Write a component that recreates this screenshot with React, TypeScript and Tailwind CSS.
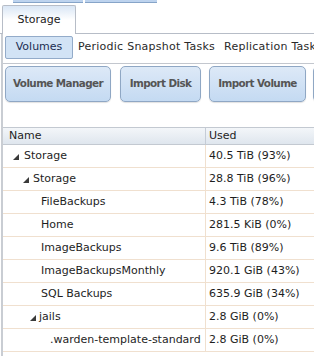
import React from "react";

const rows: { name: string; used: string; tri?: number; text: number }[] = [
  { name: "Storage", used: "40.5 TiB (93%)", tri: 10, text: 21 },
  { name: "Storage", used: "28.8 TiB (96%)", tri: 20, text: 30 },
  { name: "FileBackups", used: "4.3 TiB (78%)", text: 38 },
  { name: "Home", used: "281.5 KiB (0%)", text: 38 },
  { name: "ImageBackups", used: "9.6 TiB (89%)", text: 38 },
  { name: "ImageBackupsMonthly", used: "920.1 GiB (43%)", text: 38 },
  { name: "SQL Backups", used: "635.9 GiB (34%)", text: 38 },
  { name: "jails", used: "2.8 GiB (0%)", tri: 27, text: 36 },
  { name: ".warden-template-standard", used: "2.8 GiB (0%)", text: 47 },
];

function Tri() {
  return (
    <svg width="6" height="6" viewBox="0 0 6 6" className="block">
      <polygon points="6,0 6,6 0,6" fill="#3a3a3a" />
    </svg>
  );
}

function Btn({ label, w, ml }: { label: string; w: string; ml: string }) {
  return (
    <div
      className={`${w} ${ml} h-[36px] shrink-0 rounded-[5px] border border-[#8fa7c4] bg-gradient-to-b from-[#dde9f7] to-[#c4daf2] flex items-center justify-center text-[10.4px] font-bold tracking-[-0.6px] text-[#555555] shadow-[0_1px_1px_rgba(0,0,0,0.12)]`}
    >
      {label}
    </div>
  );
}

export default function App() {
  return (
    <div
      className="w-[314px] h-[356px] overflow-hidden bg-white text-[11px] text-[#1e1e1e]"
      style={{ fontFamily: '"DejaVu Sans", Verdana, sans-serif' }}
    >
      {/* top strip: bottoms of tabs above */}
      <div className="flex h-[3px]">
        <div className="ml-[13px] w-[70px] h-[3px] bg-[#bdd3ee] border-b border-[#86a4c8]" />
        <div className="ml-[2px] w-[72px] h-[3px] bg-[#bdd3ee] border-b border-[#86a4c8]" />
      </div>
      {/* tab strip */}
      <div className="flex items-end h-[31px] border-b border-[#b7bdc7]">
        <div className="ml-[2px] -mb-px w-[74px] h-[29px] border border-b-0 border-[#b7bdc7] rounded-t-[2px] bg-gradient-to-b from-[#d9e6f5] via-white to-white flex items-center justify-center text-[#222]">
          Storage
        </div>
      </div>
      {/* pane */}
      <div className="ml-[1px] border-l-2 border-[#c9cdd3] h-[400px]">
        <div className="flex items-start h-[30px] pt-[2px] border-b border-[#c3c7ce] whitespace-nowrap overflow-hidden">
          <div className="ml-[2px] w-[68px] h-[23px] shrink-0 rounded-[2px] border border-[#93abc9] bg-[#d2e3f5] flex items-center justify-center text-[#1b2d52]">
            Volumes
          </div>
          <div className="ml-[5px] h-[23px] shrink-0 flex items-center text-[#2a2a2a] tracking-[0.25px]">
            Periodic Snapshot Tasks
          </div>
          <div className="ml-[9px] h-[23px] shrink-0 flex items-center text-[#2a2a2a] tracking-[0.25px]">
            Replication Tasks
          </div>
        </div>
        <div className="flex pt-[2px]">
          <Btn label="Volume Manager" w="w-[106px]" ml="ml-[2px]" />
          <Btn label="Import Disk" w="w-[81px]" ml="ml-[9px]" />
          <Btn label="Import Volume" w="w-[97px]" ml="ml-[8px]" />
          <Btn label="" w="w-[90px]" ml="ml-[7px]" />
        </div>
        {/* table */}
        <div className="mt-[25px] w-[400px]">
          <div className="flex h-[18px] border-t border-b border-[#c3c9d1] bg-gradient-to-b from-[#f3f6f9] to-[#dfe6ee]">
            <div className="w-[203px] pl-[6px] flex items-center border-r border-[#c5ccd6]">Name</div>
            <div className="pl-[3px] flex items-center">Used</div>
          </div>
          {rows.map((r, i) => (
            <div key={i} className="flex h-[23px] border-b border-[#f0e0cf] whitespace-nowrap">
              <div className="w-[203px] relative flex items-center border-r border-[#f0e0cf] overflow-hidden">
                {r.tri !== undefined && (
                  <div className="absolute top-[9px]" style={{ left: r.tri }}>
                    <Tri />
                  </div>
                )}
                <span style={{ paddingLeft: r.text }}>{r.name}</span>
              </div>
              <div className="pl-[3px] flex items-center">{r.used}</div>
            </div>
          ))}
        </div>
      </div>
    </div>
  );
}
